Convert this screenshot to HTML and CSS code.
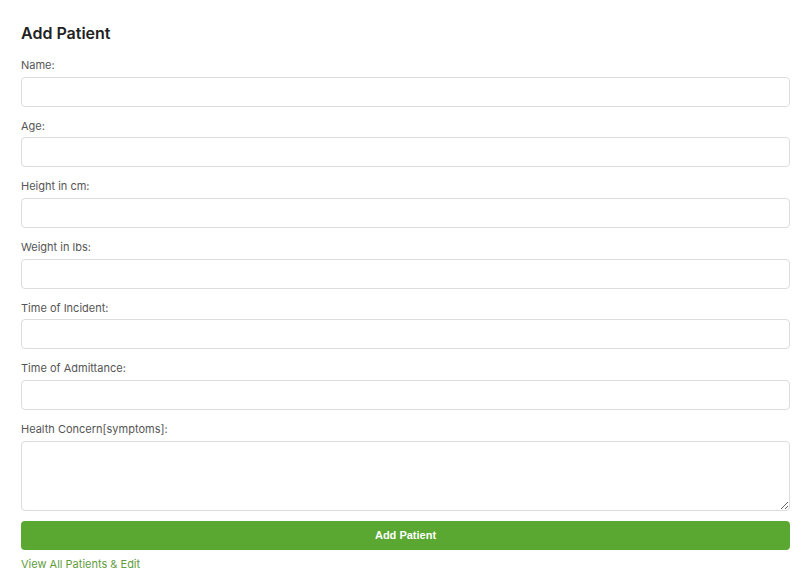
FILE: index.html
```html
<!DOCTYPE html>
<html>
<head>
<meta charset="utf-8">
<link rel="stylesheet" href="styles.css">
</head>
<body>
<div class="page">
  <h2 class="title">Add Patient</h2>
  <form class="form">
    <label class="label">Name:</label>
    <input class="field" type="text">
    <label class="label">Age:</label>
    <input class="field" type="text">
    <label class="label">Height in cm:</label>
    <input class="field" type="text">
    <label class="label">Weight in lbs:</label>
    <input class="field" type="text">
    <label class="label">Time of Incident:</label>
    <input class="field" type="text">
    <label class="label">Time of Admittance:</label>
    <input class="field" type="text">
    <label class="label">Health Concern[symptoms]:</label>
    <textarea class="field area"></textarea>
    <button class="btn" type="button">Add Patient</button>
  </form>
  <a class="link" href="#">View All Patients &amp; Edit</a>
</div>
</body>
</html>
```
FILE: styles.css
```css
html, body { margin: 0; padding: 0; background: #fff; }
.page {
  padding: 23px 16px 0 21px;
  font-family: Inter, "Noto Sans", sans-serif;
}
.title {
  margin: 0 0 15px 0;
  font-size: 16px;
  line-height: 20px;
  font-weight: 600;
  color: #222;
}
.form { display: flex; flex-direction: column; }
.label {
  font-size: 11px;
  line-height: 14.67px;
  font-weight: 400;
  color: #555;
  margin-bottom: 4px;
}
.field {
  box-sizing: border-box;
  height: 30px;
  width: 100%;
  border: 1px solid #ddd;
  border-radius: 4px;
  margin: 0 0 12px 0;
  padding: 4px 8px;
  font-family: inherit;
  background: #fff;
}
.area {
  height: 70px;
  margin-bottom: 10px;
  display: block;
}
.btn {
  height: 29px;
  width: 100%;
  border: none;
  border-radius: 4px;
  background: #5aa732;
  color: #fff;
  font-family: "Liberation Sans", Arial, sans-serif;
  font-weight: bold;
  font-size: 11px;
  margin-bottom: 7px;
}
.link {
  display: block;
  font-size: 11px;
  line-height: 14px;
  font-weight: 400;
  color: #5f9c3c;
  text-decoration: none;
}
```
